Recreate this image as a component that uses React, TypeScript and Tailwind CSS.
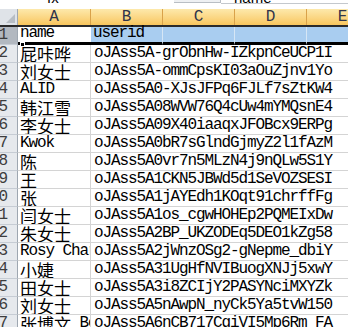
const rows: [string, string][] = [
  ["屁咔哗", "oJAss5A-grObnHw-IZkpnCeUCP1I"],
  ["刘女士", "oJAss5A-ommCpsKI03aOuZjnv1Yo"],
  ["ALID", "oJAss5A0-XJsJFPq6FJLf7sZtKW4"],
  ["韩江雪", "oJAss5A08WVW76Q4cUw4mYMQsnE4"],
  ["李女士", "oJAss5A09X40iaaqxJFOBcx9ERPg"],
  ["Kwok", "oJAss5A0bR7sGlndGjmyZ2l1fAzM"],
  ["陈", "oJAss5A0vr7n5MLzN4j9nQLw5S1Y"],
  ["王", "oJAss5A1CKN5JBWd5d1SeVOZSESI"],
  ["张", "oJAss5A1jAYEdh1KOqt91chrffFg"],
  ["闫女士", "oJAss5A1os_cgwHOHEp2PQMEIxDw"],
  ["朱女士", "oJAss5A2BP_UKZODEq5DEO1kZg58"],
  ["Rosy Char", "oJAss5A2jWnzOSg2-gNepme_dbiY"],
  ["小婕", "oJAss5A31UgHfNVIBuogXNJj5xwY"],
  ["田女士", "oJAss5A3i8ZCIjY2PASYNciMXYZk"],
  ["刘女士", "oJAss5A5nAwpN_nyCk5Ya5tvW150"],
  ["张博文 Bo", "oJAss5A6nCB717CqiVI5Mp6Rm_FA"],
];

const mono = "font-['Liberation_Mono',monospace] text-[16px] tracking-[-1.1px]";
const cjk =
  "inline-block font-['Noto_Sans_CJK_SC',sans-serif] text-[17px] leading-[17px]";

// split a name into latin and CJK runs so each gets its own font
function Name({ text }: { text: string }) {
  const parts = text.match(/[\u4e00-\u9fff]+|[^\u4e00-\u9fff]+/g) || [];
  return (
    <>
      {parts.map((p, i) =>
        /[\u4e00-\u9fff]/.test(p) ? (
          <span key={i} className={cjk}>
            {p}
          </span>
        ) : (
          <span key={i} className={`${mono} whitespace-pre`}>
            {p}
          </span>
        )
      )}
    </>
  );
}

function RowHead({ n, selected }: { n: number; selected?: boolean }) {
  return (
    <div
      className={`w-[18px] shrink-0 flex items-end justify-end pr-[10px] overflow-hidden border-r border-[#9ea7b1] border-b border-b-[#c6ccd4] text-[#3d3d3d] ${
        selected ? "bg-[#b2b8c0]" : "bg-[#e6e9ed]"
      }`}
    >
      <span className={`${mono} leading-[17px] whitespace-nowrap`}>{n}</span>
    </div>
  );
}

export default function App() {
  return (
    <div className="w-[348px] h-[327px] overflow-hidden bg-white">
      {/* formula bar remains */}
      <div className="h-[9px] relative overflow-hidden bg-white">
        <div className="absolute left-[174px] top-0 w-[47px] h-[3px] bg-[#eef0f2] border-r border-b border-[#b9bec4]" />
        <div className="absolute left-[221px] right-0 top-[3px] h-px bg-[#c4c8cd]" />
        <span className="absolute left-[47px] top-[-13px] text-[15px] text-black font-['Liberation_Sans',sans-serif]">
          fx
        </span>
        <span className="absolute left-[234px] top-[-13px] text-[15px] text-black font-['Liberation_Sans',sans-serif]">
          name
        </span>
      </div>

      {/* column headers */}
      <div className="flex h-[18px] border-b-2 border-[#2a2a2a]">
        <div className="w-[18px] shrink-0 bg-[#dfe3e8] border-r border-[#9ea7b1] flex items-end justify-end p-[2px]">
          <svg width="9" height="9" viewBox="0 0 9 9">
            <polygon points="9,0 9,9 0,9" fill="#b7bdc4" />
          </svg>
        </div>
        {["A", "B", "C", "D", "E"].map((c, i) => (
          <div
            key={c}
            className={`${i === 0 ? "w-[73px]" : "w-[72px]"} shrink-0 flex items-center justify-center bg-linear-to-b from-[#fde9ab] to-[#f8c65d] border-r border-[#d9a24a] text-[#30344a]`}
          >
            <span className="font-['Liberation_Mono',monospace] text-[16px] leading-[16px]">
              {c}
            </span>
          </div>
        ))}
      </div>

      {/* row 1, selected */}
      <div className="flex h-[18px] relative">
        <RowHead n={1} selected />
        <div className="w-[73px] shrink-0 bg-white border-b-[3px] border-black flex items-end px-[2px] overflow-hidden whitespace-nowrap">
          <span className={`${mono} leading-[17px]`}>name</span>
        </div>
        <div className="w-[72px] shrink-0 bg-[#a9cdf0] border-b-[3px] border-black border-r border-r-[#d6e6f5] flex items-end px-[2px] overflow-visible whitespace-nowrap">
          <span className={`${mono} leading-[17px]`}>userid</span>
        </div>
        <div className="w-[72px] shrink-0 bg-[#a9cdf0] border-b-[3px] border-black border-r border-r-[#d6e6f5]" />
        <div className="w-[72px] shrink-0 bg-[#a9cdf0] border-b-[3px] border-black border-r border-r-[#d6e6f5]" />
        <div className="w-[72px] shrink-0 bg-[#a9cdf0] border-b-[3px] border-black" />
        <div className="absolute left-[20px] top-[15px] w-[5px] h-[5px] bg-black border border-white" />
      </div>

      {rows.map(([name, id], i) => (
        <div key={i} className="flex h-[18px]">
          <RowHead n={i + 2} />
          <div className="w-[73px] shrink-0 border-r border-b border-[#d4d4d4] flex items-end px-[2px] overflow-hidden whitespace-nowrap leading-[17px]">
            <Name text={name} />
          </div>
          <div className="w-[288px] shrink-0 border-b border-[#d4d4d4] flex items-end px-[3px] whitespace-nowrap">
            <span className={`${mono} leading-[17px]`}>{id}</span>
          </div>
        </div>
      ))}
    </div>
  );
}
